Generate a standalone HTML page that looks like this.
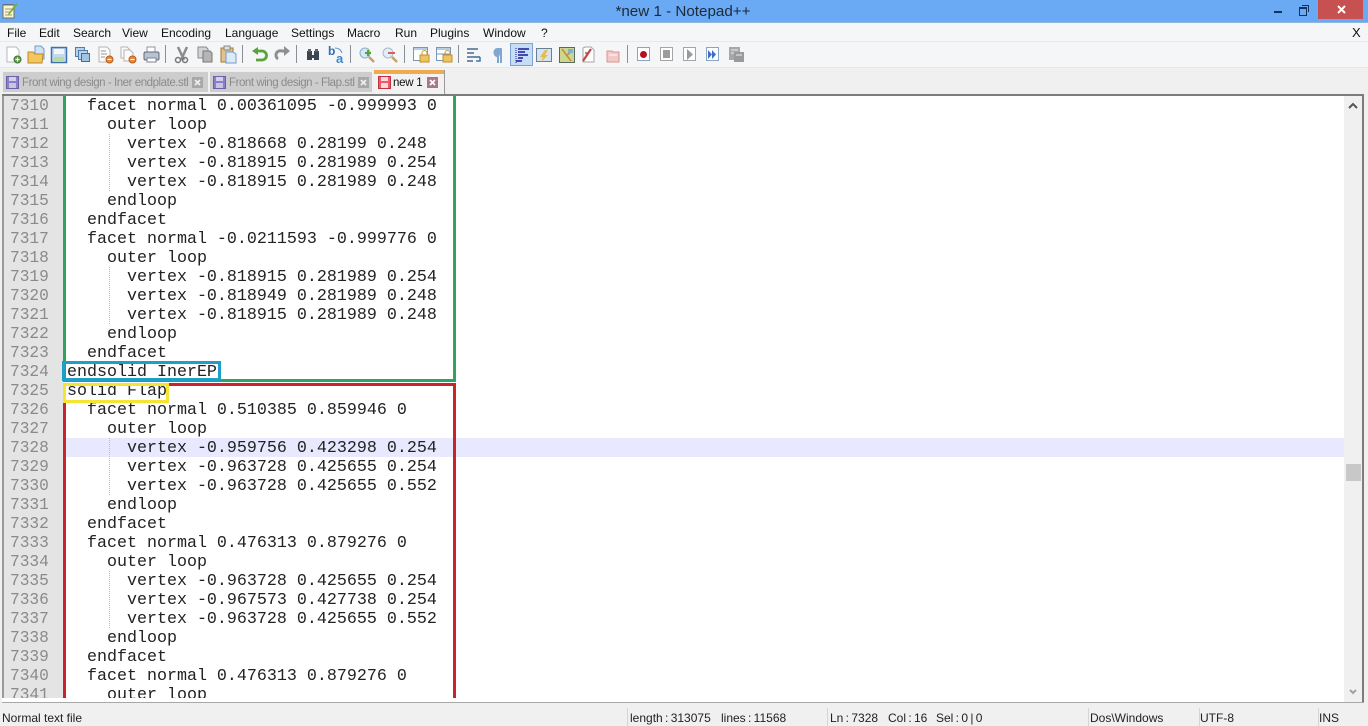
<!DOCTYPE html>
<html><head><meta charset="utf-8">
<style>
html,body{margin:0;padding:0;background:#f0f0f0}
#w{position:relative;width:1368px;height:726px;overflow:hidden;background:#f0f0f0;font-family:"Liberation Sans",sans-serif}
.a{position:absolute}
.m{position:absolute;top:25px;font-size:12px;line-height:16px;color:#111;white-space:nowrap}
.s{position:absolute;top:711px;font-size:12px;line-height:14px;color:#222;white-space:nowrap}
.n{word-spacing:-1px}
.t{position:absolute;left:67px;height:19px;line-height:19px;font-family:"Liberation Mono",monospace;font-size:16.67px;color:#222;white-space:pre;margin-top:1px}
.ln{position:absolute;left:10px;height:19px;line-height:19px;font-family:"Liberation Mono",monospace;font-size:16.2px;color:#8a8a8a;white-space:pre;margin-top:1px}
.sep{position:absolute;top:45px;width:1px;height:18px;background:#8a8f96}
.tab{position:absolute;font-size:11.5px;color:#8b8b8b;white-space:nowrap;letter-spacing:-.45px;line-height:14px}
</style></head><body><div id="w">
<div class="a" style="left:0;top:0;width:1368px;height:23px;background:#6aa9f3"></div>
<div class="a" style="left:0;top:22px;width:1368px;height:1px;background:#8fb5dd"></div>
<svg class="a" style="left:1px;top:1px" width="18" height="18" viewBox="0 0 18 18"><rect x="2" y="4" width="11" height="13" fill="#fbf6d0" stroke="#77705a"/><path d="M3 4v-1M5 4v-1M7 4v-1M9 4v-1M11 4v-1" stroke="#555"/><path d="M4 8h7M4 11h6M4 14h7" stroke="#9a9a80"/><path d="M7 13 15 2l2 1-9 11z" fill="#7bb02c"/></svg>
<div class="a" style="left:615px;top:3px;width:136px;text-align:center;font-size:15.2px;line-height:18px;color:#1c2a3a;white-space:nowrap">*new 1 - Notepad++</div>
<div class="a" style="left:1274px;top:11px;width:8px;height:2px;background:#12325a"></div>
<div class="a" style="left:1299px;top:7px;width:6px;height:6px;border:1px solid #12325a;border-top-width:2px;background:#6aa9f3"></div>
<div class="a" style="left:1302px;top:5px;width:7px;height:1px;background:#12325a"></div>
<div class="a" style="left:1308px;top:5px;width:1px;height:7px;background:#12325a"></div>
<div class="a" style="left:1318px;top:0;width:45px;height:19px;background:#c75050"></div>
<svg class="a" style="left:1336px;top:4px" width="11" height="11"><path d="M2 2 9 9M9 2 2 9" stroke="#fff" stroke-width="2"/></svg>
<div class="a" style="left:0;top:23px;width:1368px;height:18px;background:#f5f6f7"></div>
<div class="a" style="left:0;top:41px;width:1368px;height:1px;background:#e8e9ea"></div>
<div class="m" style="left:7px">File</div><div class="m" style="left:39px">Edit</div><div class="m" style="left:73px">Search</div><div class="m" style="left:122px">View</div><div class="m" style="left:161px">Encoding</div><div class="m" style="left:225px">Language</div><div class="m" style="left:291px">Settings</div><div class="m" style="left:347px">Macro</div><div class="m" style="left:395px">Run</div><div class="m" style="left:430px">Plugins</div><div class="m" style="left:483px">Window</div><div class="m" style="left:541px">?</div><div class="m" style="left:1352px;font-size:13px">X</div>
<div class="a" style="left:0;top:42px;width:1368px;height:25px;background:#f5f6f7"></div>
<div class="a" style="left:0;top:67px;width:1368px;height:1px;background:#e6e7e8"></div>
<svg class="a" style="left:0;top:42px" width="780" height="26" viewBox="0 0 780 26" fill="none">
<path d="M7 5h9l3 3v12H7z" fill="#fff" stroke="#b5b8bc"/><circle cx="17.500" cy="17.500" r="3.500" fill="#6aa84f" stroke="#43703a"/><path d="M15.500 17.500h4M17.500 15.500v4" stroke="#fff"/>
<path d="M35 4h6l3 3v10H35z" fill="#cfe2f5" stroke="#6f9cc8"/><path d="M28 10h5l2 2h8l-1 9H28z" fill="#f5c65f" stroke="#b78a2b"/>
<rect x="51.500" y="5.500" width="15" height="15" fill="#c3d8ee" stroke="#3f72ad" stroke-width="1.500"/><rect x="54" y="7" width="10" height="5" fill="#f2f6fb"/><rect x="54" y="15" width="10" height="5" fill="#b4dc9c"/>
<rect x="75.500" y="5.500" width="9" height="9" fill="#bcd2e8" stroke="#4f7eac"/><rect x="78.500" y="8.500" width="9" height="9" fill="#bcd2e8" stroke="#4f7eac"/><rect x="81.500" y="11.500" width="8" height="8" fill="#a2c3e2" stroke="#3f6f9f"/>
<path d="M99 5h8l3 3v12H99z" fill="#fbfbfb" stroke="#b5b5b5"/><path d="M101 9h5M101 12h6M101 15h4" stroke="#999"/><circle cx="109.500" cy="17.500" r="3.500" fill="#ec8a3c" stroke="#b85a1a"/><path d="M107.500 17.500h4" stroke="#fff"/>
<path d="M121 5h6l3 3v8h-9z" fill="#fbfbfb" stroke="#b5b5b5"/><path d="M124 8h6l3 3v8h-9z" fill="#fbfbfb" stroke="#b5b5b5"/><circle cx="132.500" cy="17.500" r="3.500" fill="#ec8a3c" stroke="#b85a1a"/><path d="M130.500 17.500h4" stroke="#fff"/>
<path d="M147 5h8v5h-8z" fill="#fff" stroke="#8c96a4"/><rect x="144" y="10" width="15" height="8" rx="1.500" fill="#b9c3d0" stroke="#5d6978"/><rect x="147" y="16" width="9" height="4" fill="#fff" stroke="#7b8590"/>
<path d="M178 5l6 13M187 5l-6 13" stroke="#8c8c8c" stroke-width="2.500"/><circle cx="178" cy="18" r="2.500" stroke="#777" stroke-width="1.500"/><circle cx="185" cy="18" r="2.500" stroke="#777" stroke-width="1.500"/>
<path d="M198 5h8l2 2v9h-10z" fill="#d4d4d4" stroke="#8a8a8a"/><path d="M203 9h7l2 2v9h-9z" fill="#b5b5b5" stroke="#777"/>
<rect x="221" y="6" width="12" height="14" fill="#e6c28b" stroke="#a0793e"/><rect x="224" y="4" width="6" height="4" fill="#ddd" stroke="#888"/><path d="M226 10h7l3 2v9h-10z" fill="#dceaf8" stroke="#6f9cc8"/>
<path d="M255 9h7a4.500 4.500 0 0 1 0 9h-6" stroke="#5aa23c" stroke-width="2.800"/><path d="M258 5l-6 4 6 4z" fill="#5aa23c"/>
<path d="M287 9h-5a4.500 4.500 0 0 0-4 8" stroke="#8f8f8f" stroke-width="3"/><path d="M284 4l6 5-6 5z" fill="#8f8f8f"/>
<path d="M307 9h5v4h2V9h5v9h-5v-2h-2v2h-5z" fill="#3c4650"/><rect x="308" y="7" width="3" height="3" fill="#59636e"/><rect x="315" y="7" width="3" height="3" fill="#59636e"/>
<text x="328" y="13" font-family="Liberation Sans" font-size="12" font-weight="bold" fill="#2d6fb8">b</text><text x="336" y="21" font-family="Liberation Sans" font-size="13" font-weight="bold" fill="#3f86c8">a</text><path d="M335 6c4 0 6 2 7 5" stroke="#5e92c8"/>
<circle cx="365" cy="11" r="5" fill="#d5e8f6" stroke="#8bb0c9"/><path d="M369 15l5 5" stroke="#c5a16d" stroke-width="2.500"/><path d="M368 8v6M365 11h6" stroke="#5aa23c" stroke-width="2"/>
<circle cx="388" cy="11" r="5" fill="#e3edf6" stroke="#a5bbcc"/><path d="M392 15l5 5" stroke="#c5a16d" stroke-width="2.500"/><path d="M388 11h7" stroke="#d8605c" stroke-width="2"/>
<rect x="413.500" y="5.500" width="14" height="13" fill="#fff" stroke="#7897b9"/><rect x="414" y="6" width="13" height="2" fill="#b7cde5"/><rect x="420" y="13" width="9" height="7" fill="#f2c35a" stroke="#bd9030"/><path d="M422 13v-2a2.500 2.500 0 0 1 5 0v2" stroke="#c39a3c"/>
<rect x="436.500" y="5.500" width="14" height="13" fill="#fff" stroke="#7897b9"/><rect x="437" y="6" width="13" height="2" fill="#b7cde5"/><path d="M437 12h13" stroke="#7897b9"/><rect x="443" y="13" width="9" height="7" fill="#f2c35a" stroke="#bd9030"/><path d="M445 13v-2a2.500 2.500 0 0 1 5 0v2" stroke="#c39a3c"/>
<path d="M467 7h11M467 11h7M467 15h13M467 19h6" stroke="#48698d" stroke-width="1.500"/><path d="M480 15v4h-4" stroke="#3d78bd" stroke-width="1.500"/>
<path d="M498 7v14M501 7v14" stroke="#7fa7cf" stroke-width="2"/><path d="M502 6h-5a3.500 4.500 0 0 0 0 9h2z" fill="#7fa7cf"/>
<rect x="511" y="2" width="21" height="21" fill="#c5ddf6"/><rect x="510.500" y="1.500" width="22" height="22" stroke="#7da2ce"/><path d="M516 6v15" stroke="#1a1a9c" stroke-dasharray="1 1"/><path d="M518 7h11M518 10h7M518 13h10M518 16h5M516 19h6" stroke="#1a1a9c" stroke-width="1.500"/>
<rect x="536.500" y="6.500" width="15" height="13" fill="#d5e3f0" stroke="#6a7f96"/><path d="M545 8l-5 7h3l-2 5 7-7h-3l3-5z" fill="#e8bb42"/>
<rect x="559.500" y="5.500" width="15" height="15" fill="#cbd68f" stroke="#5a6a5a"/><path d="M562 7l9 12M573 8l-7 6" stroke="#c88d3a" stroke-width="1.500"/><rect x="568" y="7" width="5" height="4" fill="#7fb2d8"/>
<path d="M585 5h6l3 3v12h-11V6z" fill="#fff" stroke="#a5a5a5"/><path d="M583 19l8-12" stroke="#be4a48" stroke-width="2.200"/><path d="M585 11h3" stroke="#be4a48" stroke-width="1.500"/>
<path d="M607 9h5l1 1h6v10h-12z" fill="#f3c9c8" stroke="#d99593"/><path d="M609 13h8" stroke="#fff"/>
<rect x="637.500" y="5.500" width="12" height="13" fill="#fff" stroke="#8ba4bf"/><circle cx="643.500" cy="12.500" r="3.500" fill="#b80f1e"/>
<rect x="660.500" y="5.500" width="12" height="13" fill="#fff" stroke="#a5a5a5"/><rect x="663" y="8" width="7" height="8" fill="#9d9d9d"/>
<rect x="683.500" y="5.500" width="12" height="13" fill="#fff" stroke="#a5a5a5"/><path d="M687 7l6 5.500-6 5.500z" fill="#9a9a9a"/>
<rect x="706.500" y="5.500" width="12" height="13" fill="#fff" stroke="#8ba4bf"/><path d="M708 8l4 4.500-4 4.500zM712 8l4 4.500-4 4.500z" fill="#3d6ec8"/>
<rect x="729" y="5" width="11" height="13" fill="#a8a8a8"/><rect x="734" y="10" width="10" height="10" fill="#9a9a9a"/><path d="M731 8h7M731 11h3M736 13h6" stroke="#eee"/>
</svg>
<div class="sep" style="left:165px"></div><div class="sep" style="left:242px"></div><div class="sep" style="left:296px"></div><div class="sep" style="left:350px"></div><div class="sep" style="left:404px"></div><div class="sep" style="left:458px"></div><div class="sep" style="left:627px"></div>

<div class="a" style="left:3px;top:72px;width:205px;height:20px;background:#cdcdcd"></div>
<div class="a" style="left:210px;top:72px;width:162px;height:20px;background:#cdcdcd"></div>
<div class="a" style="left:374px;top:70px;width:70px;height:24px;background:#f2f2f2;border-right:1px solid #9a9a9a"></div>
<div class="a" style="left:374px;top:70px;width:70px;height:4px;background:#f0aa50"></div>
<svg class="a" style="left:0;top:70px" width="450" height="24" fill="none">
<rect x="6.500" y="6.500" width="12" height="12" fill="#8a80c8" stroke="#6a62a8"/><rect x="9" y="7" width="7" height="4" fill="#d4d0ec"/><rect x="9" y="13" width="7" height="5" fill="#c8c4e4"/>
<rect x="213.500" y="6.500" width="12" height="12" fill="#8a80c8" stroke="#6a62a8"/><rect x="216" y="7" width="7" height="4" fill="#d4d0ec"/><rect x="216" y="13" width="7" height="5" fill="#c8c4e4"/>
<rect x="378.500" y="6.500" width="12" height="12" fill="#ee5a68" stroke="#c03040"/><rect x="381" y="7" width="7" height="4" fill="#fbd8dc"/><rect x="381" y="13" width="7" height="5" fill="#fbd8dc"/>
<rect x="192" y="7" width="11" height="11" fill="#a8a8a8"/><path d="M195 10l5 5M200 10l-5 5" stroke="#eee" stroke-width="1.800"/>
<rect x="358" y="7" width="11" height="11" fill="#a8a8a8"/><path d="M361 10l5 5M366 10l-5 5" stroke="#eee" stroke-width="1.800"/>
<rect x="427" y="7" width="11" height="11" fill="#a87888"/><path d="M430 10l5 5M435 10l-5 5" stroke="#fff" stroke-width="1.800"/>
</svg>
<div class="tab" style="left:22px;top:76px">Front wing design - Iner endplate.stl</div>
<div class="tab" style="left:229px;top:76px">Front wing design - Flap.stl</div>
<div class="tab" style="left:393px;top:76px;color:#111;letter-spacing:-.25px">new 1</div>

<div class="a" style="left:2px;top:94px;width:1362px;height:2px;background:#7c7c7c"></div>
<div class="a" style="left:2px;top:96px;width:1362px;height:606px;background:#fff"></div>
<div class="a" style="left:2px;top:96px;width:2px;height:606px;background:#9a9a9a"></div>
<div class="a" style="left:4px;top:96px;width:59px;height:602px;background:#e4e4e4"></div>
<div class="a" style="left:66px;top:438px;width:1278px;height:19px;background:#e8e8ff"></div>
<div class="a" style="left:109px;top:134px;height:57px;border-left:1px dotted #bbb"></div>
<div class="a" style="left:109px;top:267px;height:57px;border-left:1px dotted #bbb"></div>
<div class="a" style="left:109px;top:438px;height:57px;border-left:1px dotted #bbb"></div>
<div class="a" style="left:109px;top:571px;height:57px;border-left:1px dotted #bbb"></div>
<div class="ln" style="top:96px">7310</div><div class="t" style="top:96px">  facet normal 0.00361095 -0.999993 0</div>
<div class="ln" style="top:115px">7311</div><div class="t" style="top:115px">    outer loop</div>
<div class="ln" style="top:134px">7312</div><div class="t" style="top:134px">      vertex -0.818668 0.28199 0.248</div>
<div class="ln" style="top:153px">7313</div><div class="t" style="top:153px">      vertex -0.818915 0.281989 0.254</div>
<div class="ln" style="top:172px">7314</div><div class="t" style="top:172px">      vertex -0.818915 0.281989 0.248</div>
<div class="ln" style="top:191px">7315</div><div class="t" style="top:191px">    endloop</div>
<div class="ln" style="top:210px">7316</div><div class="t" style="top:210px">  endfacet</div>
<div class="ln" style="top:229px">7317</div><div class="t" style="top:229px">  facet normal -0.0211593 -0.999776 0</div>
<div class="ln" style="top:248px">7318</div><div class="t" style="top:248px">    outer loop</div>
<div class="ln" style="top:267px">7319</div><div class="t" style="top:267px">      vertex -0.818915 0.281989 0.254</div>
<div class="ln" style="top:286px">7320</div><div class="t" style="top:286px">      vertex -0.818949 0.281989 0.248</div>
<div class="ln" style="top:305px">7321</div><div class="t" style="top:305px">      vertex -0.818915 0.281989 0.248</div>
<div class="ln" style="top:324px">7322</div><div class="t" style="top:324px">    endloop</div>
<div class="ln" style="top:343px">7323</div><div class="t" style="top:343px">  endfacet</div>
<div class="ln" style="top:362px">7324</div><div class="t" style="top:362px">endsolid InerEP</div>
<div class="ln" style="top:381px">7325</div><div class="t" style="top:381px">solid Flap</div>
<div class="ln" style="top:400px">7326</div><div class="t" style="top:400px">  facet normal 0.510385 0.859946 0</div>
<div class="ln" style="top:419px">7327</div><div class="t" style="top:419px">    outer loop</div>
<div class="ln" style="top:438px">7328</div><div class="t" style="top:438px">      vertex -0.959756 0.423298 0.254</div>
<div class="ln" style="top:457px">7329</div><div class="t" style="top:457px">      vertex -0.963728 0.425655 0.254</div>
<div class="ln" style="top:476px">7330</div><div class="t" style="top:476px">      vertex -0.963728 0.425655 0.552</div>
<div class="ln" style="top:495px">7331</div><div class="t" style="top:495px">    endloop</div>
<div class="ln" style="top:514px">7332</div><div class="t" style="top:514px">  endfacet</div>
<div class="ln" style="top:533px">7333</div><div class="t" style="top:533px">  facet normal 0.476313 0.879276 0</div>
<div class="ln" style="top:552px">7334</div><div class="t" style="top:552px">    outer loop</div>
<div class="ln" style="top:571px">7335</div><div class="t" style="top:571px">      vertex -0.963728 0.425655 0.254</div>
<div class="ln" style="top:590px">7336</div><div class="t" style="top:590px">      vertex -0.967573 0.427738 0.254</div>
<div class="ln" style="top:609px">7337</div><div class="t" style="top:609px">      vertex -0.963728 0.425655 0.552</div>
<div class="ln" style="top:628px">7338</div><div class="t" style="top:628px">    endloop</div>
<div class="ln" style="top:647px">7339</div><div class="t" style="top:647px">  endfacet</div>
<div class="ln" style="top:666px">7340</div><div class="t" style="top:666px">  facet normal 0.476313 0.879276 0</div>
<div class="ln" style="top:685px">7341</div><div class="t" style="top:685px">    outer loop</div>
<div class="a" style="left:2px;top:698px;width:1342px;height:4px;background:#fff"></div>

<div class="a" style="left:63px;top:96px;width:3px;height:286px;background:#2fa35f"></div>
<div class="a" style="left:453px;top:96px;width:3px;height:286px;background:#2fa35f"></div>
<div class="a" style="left:63px;top:379px;width:393px;height:3px;background:#2fa35f"></div>
<div class="a" style="left:63px;top:383px;width:393px;height:3px;background:#c8242c"></div>
<div class="a" style="left:63px;top:383px;width:3px;height:315px;background:#c8242c"></div>
<div class="a" style="left:453px;top:383px;width:3px;height:315px;background:#c8242c"></div>
<div class="a" style="left:62px;top:361px;width:153px;height:14px;border:3px solid #1e9fc8"></div>
<div class="a" style="left:63px;top:383px;width:100px;height:14px;border:3px solid #f5e532"></div>

<div class="a" style="left:1344px;top:96px;width:18px;height:606px;background:#f0f0f0"></div>
<svg class="a" style="left:1344px;top:96px" width="18" height="18" fill="none"><path d="M5 12l4-4 4 4" stroke="#555" stroke-width="2"/></svg>
<svg class="a" style="left:1344px;top:684px" width="18" height="18" fill="none"><path d="M6 6l3 3 3-3" stroke="#a0a0a0" stroke-width="2"/></svg>
<div class="a" style="left:1346px;top:464px;width:15px;height:17px;background:#c8c8c8"></div>
<div class="a" style="left:1362px;top:94px;width:2px;height:608px;background:#7c7c7c"></div>
<div class="a" style="left:2px;top:702px;width:1362px;height:1px;background:#a8a8a8"></div>

<div class="a" style="left:627px;top:708px;width:1px;height:18px;background:#d5d5d5"></div>
<div class="a" style="left:827px;top:708px;width:1px;height:18px;background:#d5d5d5"></div>
<div class="a" style="left:1088px;top:708px;width:1px;height:18px;background:#d5d5d5"></div>
<div class="a" style="left:1199px;top:708px;width:1px;height:18px;background:#d5d5d5"></div>
<div class="a" style="left:1318px;top:708px;width:1px;height:18px;background:#d5d5d5"></div>
<div class="s" style="left:2px">Normal text file</div>
<div class="s n" style="left:630px">length : 313075</div>
<div class="s n" style="left:721px">lines : 11568</div>
<div class="s n" style="left:830px">Ln : 7328</div>
<div class="s n" style="left:888px">Col : 16</div>
<div class="s n" style="left:936px">Sel : 0 | 0</div>
<div class="s" style="left:1090px">Dos\Windows</div>
<div class="s" style="left:1200px">UTF-8</div>
<div class="s" style="left:1319px">INS</div>
</div></body></html>
